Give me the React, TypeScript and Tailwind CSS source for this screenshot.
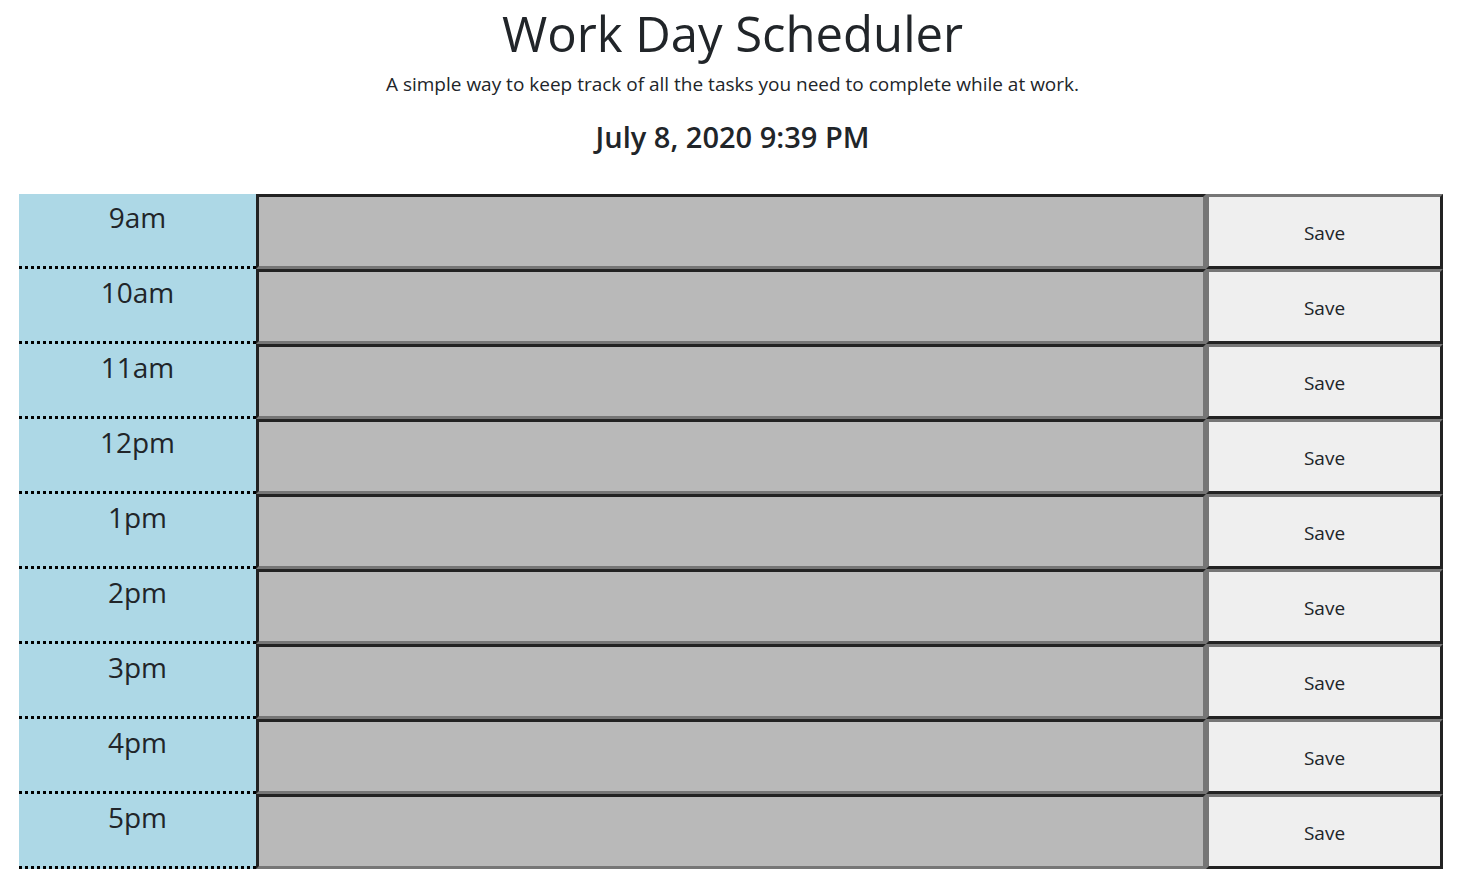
import React from 'react';

const HOURS = ['9am', '10am', '11am', '12pm', '1pm', '2pm', '3pm', '4pm', '5pm'];

const TimeBlock: React.FC<{ hour: string }> = ({ hour }) => (
  <div className="flex h-[75px]">
    <div className="w-[237px] shrink-0 bg-[#add8e6] border-b-[3px] border-dotted border-black text-center text-[28px] leading-[1.5] pt-[2px]">
      {hour}
    </div>
    <textarea
      className="w-[950px] shrink-0 resize-none bg-[#b9b9b9] border-[3px] border-t-[#222222] border-l-[#222222] border-b-[#767676] border-r-[#767676] outline-none"
      aria-label={hour}
    />
    <button className="w-[237px] shrink-0 bg-[#efefef] border-[3px] border-t-[#767676] border-l-[#767676] border-b-[#222222] border-r-[#222222] text-[19px] pt-[3px]">
      Save
    </button>
  </div>
);

export default function App() {
  return (
    <div className="min-h-screen bg-white text-[#212529]" style={{ fontFamily: '"Open Sans", "Noto Sans", sans-serif' }}>
      <header className="text-center">
        <h1 className="text-[49px] leading-[1.37] font-normal">Work Day Scheduler</h1>
        <p className="mt-[3px] text-[19px] leading-[1.5] font-normal">
          A simple way to keep track of all the tasks you need to complete while at work.
        </p>
        <p className="mt-[21px] text-[29px] leading-[1.2] font-semibold">July 8, 2020 9:39 PM</p>
      </header>
      <div className="ml-[19px] w-[1424px] mt-[40px]">
        {HOURS.map((h) => (
          <TimeBlock key={h} hour={h} />
        ))}
      </div>
    </div>
  );
}
